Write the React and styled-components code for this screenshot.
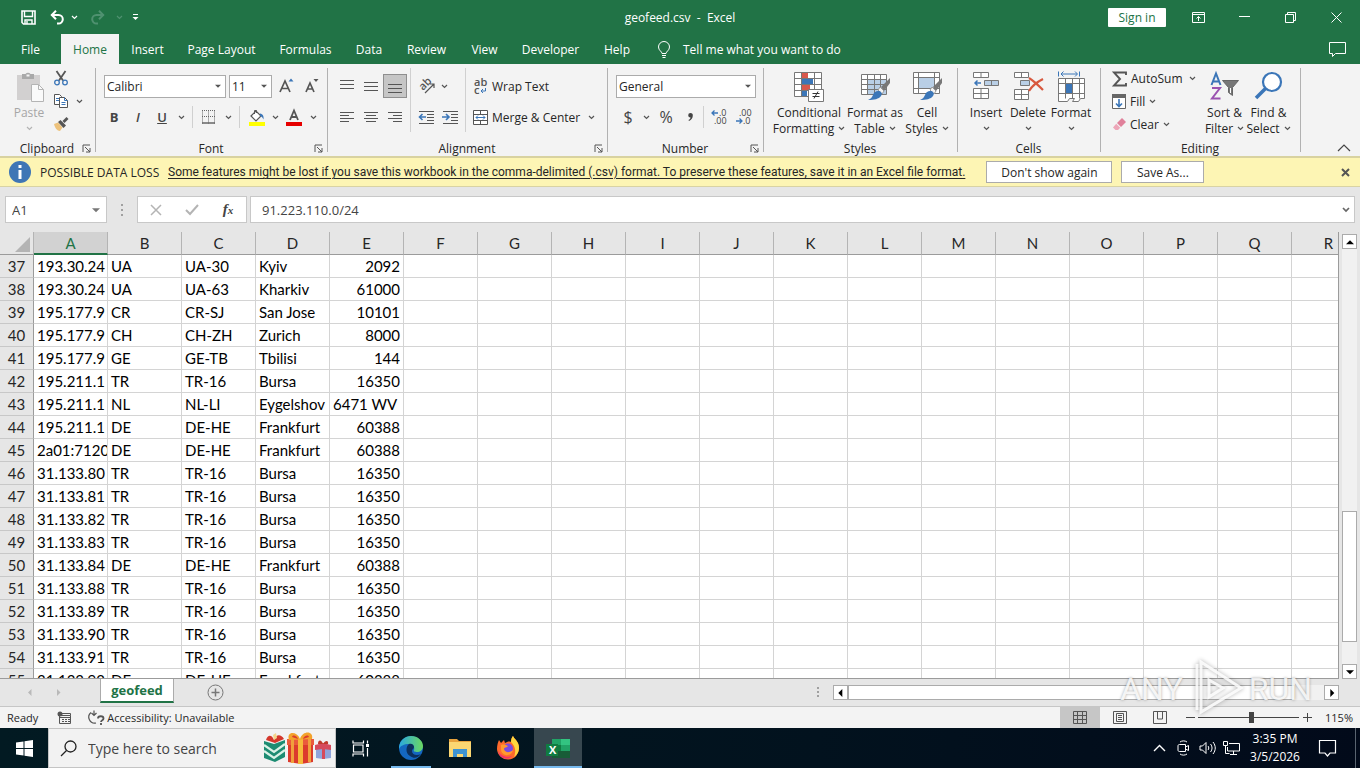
import React from "react";
import styled, { createGlobalStyle, css } from "styled-components";

const uiFont = `"Open Sans", "Noto Sans", sans-serif`;
const cellFont = `"Lato", "Open Sans", sans-serif`;

const GlobalStyle = createGlobalStyle`
  * {
    box-sizing: border-box;
  }
  body {
    margin: 0;
    overflow: hidden;
    font-family: ${uiFont};
    font-size: 12px;
    color: #262626;
  }
  button, input, select {
    font: inherit;
    color: inherit;
    margin: 0;
    padding: 0;
  }
  button {
    border: none;
    background: none;
    white-space: nowrap;
  }
  svg {
    display: block;
    flex: none;
    overflow: visible;
  }
`;

const Desktop = styled.div`
  height: 100vh;
  display: flex;
  flex-direction: column;
  background: #e6e6e6;
`;

/* ---------- title bar ---------- */

const TitleBar = styled.header`
  height: 34px;
  flex: none;
  display: grid;
  grid-template-columns: 1fr auto 1fr;
  align-items: center;
  background: #217346;
  color: #fff;
`;

const QuickAccess = styled.div`
  display: flex;
  align-items: center;
  padding-left: 16px;
`;

const WindowButtons = styled.div`
  display: flex;
  align-items: center;
  justify-content: flex-end;
  padding-right: 1px;
`;

const SignIn = styled.button`
  width: 58px;
  height: 19px;
  margin-right: 9px;
  background: #fff;
  color: #217346;
  border-radius: 1px;
`;

const IconButton = styled.button`
  width: ${(p) => p.$w || 24}px;
  height: ${(p) => p.$h || 24}px;
  flex: none;
  display: flex;
  align-items: center;
  justify-content: center;
  ${(p) =>
    p.$on &&
    css`
      background: #c6c6c6;
      border: 1px solid #8f8f8f;
    `}
`;

/* ---------- tabs ---------- */

const TabBar = styled.nav`
  height: 30px;
  flex: none;
  display: flex;
  align-items: stretch;
  background: #217346;
  padding-right: 11px;
`;

const Tab = styled.button`
  width: ${(p) => p.$w}px;
  color: ${(p) => (p.$active ? "#217346" : "#fff")};
  background: ${(p) => (p.$active ? "#f3f3f3" : "none")};
`;

const TellMe = styled.button`
  display: flex;
  align-items: center;
  gap: 12px;
  margin-left: 14px;
  margin-right: auto;
  color: #fff;
`;

/* ---------- ribbon ---------- */

const Ribbon = styled.div`
  height: 92px;
  flex: none;
  display: flex;
  padding-top: 4px;
  background: #f3f3f3;
`;

const Group = styled.section`
  width: ${(p) => p.$w}px;
  height: 88px;
  flex: none;
  display: flex;
  flex-direction: column;
  background: linear-gradient(#b1b1b1, #b1b1b1) right top / 1px 84px no-repeat;
`;

const GroupBody = styled.div`
  height: 72px;
  display: flex;
  align-items: flex-start;
  padding-left: ${(p) => p.$pad || 0}px;
`;

const GroupFooter = styled.div`
  height: 16px;
  display: grid;
  grid-template-columns: 16px 1fr 16px;
  align-items: center;
  justify-items: center;
  padding-right: 2px;
`;

const Stack = styled.div`
  display: flex;
  flex-direction: column;
  gap: ${(p) => p.$gap || 0}px;
`;

const Line = styled.div`
  display: flex;
  align-items: center;
  gap: ${(p) => p.$gap || 0}px;
  height: ${(p) => p.$h || 24}px;
  padding-left: ${(p) => p.$pad || 0}px;
`;

const Rule = styled.span`
  width: 1px;
  height: ${(p) => p.$h || 22}px;
  margin: 0 ${(p) => p.$m || 4}px;
  background: #d0d0d0;
`;

const BigButton = styled.button`
  width: ${(p) => p.$w}px;
  height: 72px;
  padding-top: 4px;
  display: flex;
  flex-direction: column;
  align-items: center;
  line-height: 16px;
  color: ${(p) => (p.$off ? "#a6a6a6" : "#262626")};
  svg:first-child {
    margin-bottom: 2px;
  }
`;

const CaretLine = styled.span`
  display: flex;
  align-items: center;
  gap: 4px;
  height: 16px;
`;

const TextButton = styled.button`
  display: flex;
  align-items: center;
  gap: 4px;
  height: ${(p) => p.$h || 24}px;
`;

const Letter = styled.span`
  font-size: 13px;
  color: #444;
  font-weight: ${(p) => (p.$bold ? 700 : 600)};
  font-style: ${(p) => (p.$italic ? "italic" : "normal")};
  text-decoration: ${(p) => (p.$under ? "underline" : "none")};
`;

const Sign = styled.span`
  font-size: 16px;
  color: #444;
`;

const SelectBox = styled.label`
  display: grid;
  align-items: center;
  width: ${(p) => p.$w}px;
  height: 23px;
  border: 1px solid #ababab;
  background: #fff;
  select {
    grid-area: 1 / 1;
    width: 100%;
    height: 21px;
    padding-left: 2px;
    border: none;
    background: none;
    appearance: none;
  }
  svg {
    grid-area: 1 / 1;
    justify-self: end;
    margin-right: 4px;
    pointer-events: none;
  }
`;

const CollapseButton = styled(IconButton)`
  margin-left: auto;
  margin-right: 4px;
  align-self: flex-end;
  height: 16px;
`;

/* ---------- message bar ---------- */

const MessageBar = styled.div`
  height: 31px;
  flex: none;
  display: flex;
  align-items: center;
  padding: 0 8px 0 9px;
  background: #fdf5b4;
  border-top: 2px solid #d8d2a0;
  border-bottom: 1px solid #d9d3a4;
`;

const MessageTitle = styled.span`
  width: 119px;
  margin: 0 9px;
  white-space: nowrap;
`;

const MessageLink = styled.span`
  flex: 0 1 787px;
  margin-right: 21px;
  white-space: nowrap;
  font-family: "Roboto", sans-serif;
  a {
    color: #262626;
    text-underline-offset: 2px;
  }
`;

const MessageButton = styled.button`
  width: ${(p) => p.$w}px;
  height: 22px;
  margin-right: 9px;
  background: #fff;
  border: 1px solid #ababab;
`;

const CloseButton = styled(IconButton)`
  width: 14px;
  margin-left: auto;
`;

/* ---------- formula bar ---------- */

const FormulaBar = styled.div`
  height: 45px;
  flex: none;
  display: flex;
  padding: 9px 5px 9px 5px;
  font-size: 13px;
  color: #444;
`;

const FormulaPart = styled.div`
  display: flex;
  align-items: center;
  width: ${(p) => (p.$w ? `${p.$w}px` : "auto")};
  flex: ${(p) => (p.$w ? "none" : "1")};
  border: 1px solid #c8c8c8;
  background: #fff;
  input {
    flex: 1;
    min-width: 0;
    height: 24px;
    padding-left: ${(p) => p.$pad || 6}px;
    border: none;
    background: none;
    outline: none;
  }
`;

const Grip = styled.span`
  width: 30px;
  display: flex;
  align-items: center;
  justify-content: center;
`;

const FxLabel = styled.span`
  font-family: "Liberation Serif", serif;
  font-style: italic;
  font-weight: 700;
  font-size: 15px;
  small {
    font-size: 11px;
  }
`;

const Gap = styled.span`
  width: ${(p) => p.$w || 3}px;
  flex: ${(p) => (p.$grow ? "1" : "none")};
`;

/* ---------- sheet ---------- */

const SheetArea = styled.main`
  flex: 1;
  min-height: 0;
  display: flex;
`;

const SheetView = styled.div`
  flex: 1;
  min-width: 0;
  overflow: hidden;
  border-right: 1px solid #9b9b9b;
  border-bottom: 1px solid #9b9b9b;
`;

const Sheet = styled.table`
  table-layout: fixed;
  width: max-content;
  border-collapse: separate;
  border-spacing: 0;
  font-family: ${cellFont};
  font-size: 15px;
  line-height: 20px;
  color: #000;
`;

const ColHead = styled.th`
  width: 74px;
  min-width: 74px;
  height: 23px;
  padding: 0;
  font-weight: 400;
  background: ${(p) => (p.$active ? "#d2d2d2" : "#e6e6e6")};
  color: ${(p) => (p.$active ? "#217346" : "#262626")};
  border-right: 1px solid #b4b4b4;
  border-bottom: ${(p) => (p.$active ? "2px solid #217346" : "1px solid #9b9b9b")};
`;

const Corner = styled.th`
  width: 34px;
  min-width: 34px;
  padding: 0 3px 2px 0;
  vertical-align: bottom;
  border-right: 1px solid #b4b4b4;
  border-bottom: 1px solid #9b9b9b;
  svg {
    margin-left: auto;
  }
`;

const RowHead = styled.th`
  height: 23px;
  padding: 0;
  font-weight: 400;
  color: #262626;
  background: #e6e6e6;
  border-right: 1px solid #9b9b9b;
  border-bottom: 1px solid #c8c8c8;
`;

const Cell = styled.td`
  height: 23px;
  max-width: 74px;
  padding: 0 3px;
  overflow: hidden;
  white-space: nowrap;
  text-align: ${(p) => (p.$right ? "right" : "left")};
  background: #fff;
  border-right: 1px solid #d4d4d4;
  border-bottom: 1px solid #d4d4d4;
`;

const VScroll = styled.div`
  width: 15px;
  margin: 2px 3px 0;
  display: flex;
  flex-direction: column;
  background: #f1f1f1;
`;

const ScrollButton = styled.button`
  width: 15px;
  height: 15px;
  flex: none;
  display: flex;
  align-items: center;
  justify-content: center;
  background: #fff;
  border: 1px solid #ababab;
`;

const VThumb = styled.div`
  height: 131px;
  margin-top: auto;
  margin-bottom: 22px;
  background: #fff;
  border: 1px solid #ababab;
`;

/* ---------- sheet tabs and status bar ---------- */

const SheetTabs = styled.div`
  height: 27px;
  flex: none;
  display: flex;
  align-items: center;
  padding-right: 21px;
`;

const SheetNav = styled.div`
  width: 100px;
  display: flex;
  padding-left: 15px;
`;

const SheetTab = styled.button`
  width: 74px;
  height: 24px;
  align-self: flex-start;
  background: #fff;
  color: #217346;
  font-size: 13px;
  font-weight: 700;
  border: 1px solid #ababab;
  border-top: none;
  border-bottom: 2px solid #217346;
`;

const AddSheet = styled(IconButton)`
  margin-left: 29px;
`;

const HScroll = styled.div`
  margin-left: auto;
  width: 39%;
  display: flex;
  align-items: center;
`;

const HTrack = styled.div`
  flex: 1;
  height: 15px;
  background: #f1f1f1;
`;

const HThumb = styled.div`
  width: 94%;
  height: 15px;
  background: #fff;
  border: 1px solid #ababab;
`;

const StatusBar = styled.footer`
  height: 22px;
  flex: none;
  display: flex;
  align-items: center;
  padding: 0 7px;
  background: #f3f3f3;
  border-top: 1px solid #c6c6c6;
  font-size: 11px;
`;

const StatusItem = styled.span`
  display: flex;
  align-items: center;
  gap: 2px;
  margin-right: ${(p) => p.$mr || 0}px;
`;

const ViewButton = styled.button`
  width: 40px;
  height: 21px;
  display: flex;
  align-items: center;
  justify-content: center;
  background: ${(p) => (p.$on ? "#c6c6c6" : "none")};
`;

const Zoom = styled.div`
  display: flex;
  align-items: center;
  margin-left: 5px;
  input {
    width: 101px;
    height: 12px;
    margin: 0 3px;
    appearance: none;
    background: linear-gradient(#444, #444) center / 100% 1px no-repeat;
  }
  input::-webkit-slider-thumb {
    appearance: none;
    width: 5px;
    height: 11px;
    background: #444;
  }
`;

const ZoomLabel = styled.span`
  width: 41px;
  text-align: right;
`;

/* ---------- taskbar ---------- */

const Taskbar = styled.div`
  height: 40px;
  flex: none;
  display: flex;
  background: linear-gradient(90deg, #021a22, #02121e 60%, #020a1a);
  color: #fff;
`;

const TaskButton = styled.button`
  width: ${(p) => p.$w || 48}px;
  height: 40px;
  margin: 0 ${(p) => p.$mx || 0}px;
  display: flex;
  align-items: center;
  justify-content: center;
  background: ${(p) => (p.$active ? "#37474f" : "none")};
  box-shadow: ${(p) => (p.$open ? "inset 0 -2px #76b9ed" : "none")};
`;

const SearchBox = styled.label`
  width: 288px;
  display: flex;
  align-items: center;
  gap: 11px;
  padding: 0 4px 0 11px;
  background: #f2f2f2;
  border: 1px solid #c4c4c4;
  color: #3c3c3c;
  input {
    flex: 1;
    min-width: 0;
    border: none;
    background: none;
    outline: none;
    font-size: 14px;
  }
  input::placeholder {
    color: #444;
    opacity: 1;
  }
`;

const Tray = styled.div`
  margin-left: auto;
  display: flex;
  align-items: center;
`;

const Clock = styled.button`
  width: 64px;
  line-height: 18px;
  text-align: center;
`;

const ShowDesktop = styled.button`
  width: 5px;
  height: 40px;
  margin-left: 8px;
  border-left: 1px solid #5a6470;
`;

const Watermark = styled.div`
  position: absolute;
  right: 48px;
  bottom: 48px;
  display: flex;
  align-items: center;
  gap: 4px;
  pointer-events: none;
  font-family: "Roboto", sans-serif;
  font-size: 32px;
  line-height: 60px;
  color: rgba(255, 255, 255, 0.85);
  text-shadow: 0 0 3px rgba(0, 0, 0, 0.35);
  svg {
    filter: drop-shadow(0 0 2px rgba(0, 0, 0, 0.35));
  }
`;

/* ---------- icons ---------- */

const Icon = ({ w = 16, h = w, children, ...rest }) => (
  <svg
    width={w}
    height={h}
    viewBox={`0 0 ${w} ${h}`}
    fill="none"
    stroke="#555"
    aria-hidden="true"
    {...rest}
  >
    {children}
  </svg>
);

const Caret = ({ color = "#555" }) => (
  <Icon w={7} h={5} stroke={color}>
    <path d="M1 1l2.500 2.500L6 1" strokeWidth="1.200" />
  </Icon>
);

const triangles = {
  down: "M0 2h7l-3.500 3.500z",
  up: "M0 5.500h7L3.500 2z",
  left: "M5.500 0v7L2 3.500z",
  right: "M2 0v7l3.500-3.500z",
};

const Triangle = ({ dir = "down", color = "#555", s = 7 }) => (
  <svg width={s} height={s} viewBox="0 0 7 7" aria-hidden="true">
    <path d={triangles[dir]} fill={color} />
  </svg>
);

const Launcher = () => (
  <Icon w={9} stroke="#555">
    <path d="M1 8V1h7M3 3l5 5M8 4v4H4" />
  </Icon>
);

const SaveIcon = () => (
  <Icon w={15} stroke="#fff">
    <path d="M1 1h13v13H2.500L1 12.500z" strokeWidth="1.600" />
    <path d="M3.500 1v5.500h8V1M4 14v-4h7v4M6 14v-3" strokeWidth="1.400" />
  </Icon>
);

const UndoIcon = ({ flip }) => (
  <Icon w={15} stroke={flip ? "#4f9170" : "#fff"}>
    <g transform={flip ? "translate(15 0) scale(-1 1)" : undefined}>
      <path d="M1.500 5h7a4.300 4.300 0 0 1 0 8.600H7" strokeWidth="2" />
      <path d="M6 .8L1.800 5 6 9.200" strokeWidth="2" />
    </g>
  </Icon>
);

const CustomizeIcon = () => (
  <Icon w={7} h={8} stroke="#fff">
    <path d="M1 1.500h5" />
    <path d="M.5 4h6l-3 3z" fill="#fff" stroke="none" />
  </Icon>
);

const PasteIcon = () => (
  <Icon w={30} h={31} stroke="none">
    <path d="M3 3h23v25H3z" fill="#d2d0d0" />
    <path d="M8 2h3.500a3 3 0 0 1 5 0H20v5H8z" fill="#a9a9a9" />
    <path d="M12.500 2.500h3v2h-3z" fill="#f3f3f3" />
    <path d="M17.500 12.500h7l5 5v12h-12z" fill="#fafafa" stroke="#b4b4b4" />
    <path d="M24.500 12.500v5h5" stroke="#b4b4b4" />
  </Icon>
);

const CutIcon = () => (
  <Icon w={16}>
    <path d="M3.500 1l6.500 9.500M12.500 1L6 10.500" strokeWidth="1.800" />
    <circle cx="4" cy="12.500" r="2.300" stroke="#3b76b8" strokeWidth="1.300" />
    <circle cx="12" cy="12.500" r="2.300" stroke="#3b76b8" strokeWidth="1.300" />
  </Icon>
);

const CopyIcon = () => (
  <Icon w={16}>
    <path d="M1.500 1.500h5l2 2v8h-7z" fill="#fff" />
    <path d="M6.500 4.500h5l3 3v7h-8z" fill="#fff" />
    <path d="M11.500 4.500v3h3M3 5.500h3M3 7.500h3M8.500 9.500h4M8.500 11.500h4" stroke="#3b76b8" />
  </Icon>
);

const PainterIcon = () => (
  <Icon w={16} stroke="none">
    <path d="M1 8l4-1.500 4.500 5L7 15c-3 0-5-3-6-7z" fill="#edc27c" />
    <path d="M5 6l2.500-2 5.500 5.500L10.500 12z" fill="#555" />
    <path d="M9.500 5L13.500 1l2 2-4 4z" fill="#555" />
  </Icon>
);

const FontSizeIcon = ({ down }) => (
  <Icon w={15} h={16}>
    <path d={down ? "M2 14L6 5l4 9M3.500 11h5" : "M1 14L6 3l5 11M2.500 10.500h7"} strokeWidth="1.700" />
    <path
      d={down ? "M9.500 1h5L12 4z" : "M9.500 3.500h5L12 .5z"}
      fill={down ? "#555" : "#3b76b8"}
      stroke="none"
    />
  </Icon>
);

const BordersIcon = () => (
  <Icon w={14} stroke="#666">
    <path d="M.5.5v13M6.500.5v13M12.500.5v13M0 .5h13M0 6.500h13" strokeDasharray="1 1" />
    <path d="M0 13h13" strokeWidth="1.500" />
  </Icon>
);

const FillColorIcon = () => (
  <Icon w={17} h={17}>
    <path d="M3 7l5-5 5 5-5 5z" fill="#fff" strokeWidth="1.200" />
    <path d="M6.500 5V1.500h2V4" />
    <path d="M12 4.500c3 .5 4 3 3.500 6-1-2-1.500-3-3.500-3.500z" fill="#3b76b8" stroke="none" />
    <path d="M1 13h16v4H1z" fill="#ffff00" stroke="none" />
  </Icon>
);

const FontColorIcon = () => (
  <Icon w={16} h={17}>
    <path d="M4 11L8 1.500 12 11M5.500 8h5" strokeWidth="1.800" />
    <path d="M0 13h16v4H0z" fill="#e60000" stroke="none" />
  </Icon>
);

// each entry is one line of the icon: [y, x1, x2]
const textLines = {
  top: [[2.5, 1, 15], [6.5, 1, 15], [10.5, 1, 15]],
  middle: [[4.5, 1, 15], [8.5, 1, 15], [12.5, 1, 15]],
  bottom: [[6.5, 1, 15], [10.5, 1, 15], [14.5, 1, 15]],
  left: [[3.5, 1, 15], [6.5, 1, 10], [9.5, 1, 15], [12.5, 1, 10]],
  center: [[3.5, 1, 15], [6.5, 3, 13], [9.5, 1, 15], [12.5, 3, 13]],
  right: [[3.5, 1, 15], [6.5, 6, 15], [9.5, 1, 15], [12.5, 6, 15]],
};

const LinesIcon = ({ kind }) => (
  <Icon w={16}>
    {textLines[kind].map(([y, a, b]) => (
      <path key={y} d={`M${a} ${y}H${b}`} />
    ))}
  </Icon>
);

const IndentIcon = ({ out }) => (
  <Icon w={17} h={16}>
    <path d="M1 2.500h15M9 5.500h7M9 8.500h7M9 11.500h7M1 14.500h15" />
    <path
      d={out ? "M8 8H2M4.500 5L1.500 8l3 3" : "M0 8h6M4 5l3 3-3 3"}
      stroke="#3b76b8"
      strokeWidth="1.600"
    />
  </Icon>
);

const OrientationIcon = () => (
  <Icon w={17} h={16}>
    <text fontSize="11" fontWeight="600" fill="#555" stroke="none" transform="translate(5 13) rotate(-45)">
      ab
    </text>
    <path d="M7 15l8.500-8.500M12 6h4v4" strokeWidth="1.200" />
  </Icon>
);

const WrapIcon = () => (
  <Icon w={15} h={17}>
    <text x="1" y="8" fontSize="11" fontWeight="600" fill="#555" stroke="none">
      ab
      <tspan x="1" y="16">
        c
      </tspan>
    </text>
    <path d="M12.500 10v3H8.500M10 11l-2 2 2 2" stroke="#3b76b8" />
  </Icon>
);

const MergeIcon = () => (
  <Icon w={15} stroke="#555">
    <path d="M.5.5h14v14H.5zM.5 4.500h14M.5 10.500h14M7.500.5v4M7.500 10.500v4" fill="#fff" />
    <path d="M3 7.500h9M5 5.500l-2 2 2 2M10 5.500l2 2-2 2" stroke="#3b76b8" />
  </Icon>
);

const CommaIcon = () => (
  <Icon w={5} h={8} stroke="none">
    <path d="M2.500 0a2.300 2.300 0 0 1 2.300 2.500C4.800 5 3.500 7 1 8l-.5-1C2 6.500 2.500 5.500 2.500 4.600A2.300 2.300 0 0 1 2.500 0z" fill="#444" />
  </Icon>
);

const DecimalIcon = ({ more }) => (
  <Icon w={17} h={16} stroke="#3b76b8">
    <text x={more ? 8 : 4} y="7" fontSize="9" fill="#444" stroke="none">
      {more ? ".0" : ".00"}
      <tspan x={more ? 3 : 8} y="15">
        {more ? ".00" : ".0"}
      </tspan>
    </text>
    <path d={more ? "M7 4H1M3.500 1.500L1 4l2.500 2.500" : "M1 12h6M4.500 9.500L7 12l-2.500 2.500"} strokeWidth="1.300" />
  </Icon>
);

const ConditionalIcon = () => (
  <Icon w={30} h={31} stroke="#777">
    <path d="M.5.5h27v24H.5z" fill="#fff" />
    <path d="M8 1h6v5H8zM8 13h8v5H8z" fill="#d8584c" stroke="none" />
    <path d="M8 7h11v5H8zM8 19h5v5H8z" fill="#3b76b8" stroke="none" />
    <path d="M.5 6.500h27M.5 12.500h27M.5 18.500h27M7.500.5v24M20.500.5v24" />
    <path d="M14.500 17.500h15v12h-15z" fill="#fff" />
    <path d="M18.500 21.500h7M18.500 24.500h7M24 19.500l-4 7" stroke="#333" />
  </Icon>
);

const Brush = () => (
  <>
    <path d="M30 6l-9 9 3 4 6-8z" fill="#777" stroke="none" />
    <path d="M20 15l4 4-2 3-4-4z" fill="#f3f3f3" stroke="#999" />
    <path d="M18 19c3 0 5 2 3 5-2 3-7 4-13 4 3-1 4-3 5-5 1-3 3-4 5-4z" fill="#3b76b8" stroke="none" />
  </>
);

const FormatTableIcon = () => (
  <Icon w={30} h={31} stroke="#777">
    <path d="M1.500 2.500h25v20h-25z" fill="#fff" />
    <path d="M8 8h18v14H8z" fill="#b9cfe6" stroke="none" />
    <path d="M1.500 7.500h25M1.500 12.500h25M1.500 17.500h25M7.500 2.500v20M14.500 2.500v20M20.500 2.500v20" />
    <Brush />
  </Icon>
);

const CellStylesIcon = () => (
  <Icon w={30} h={31} stroke="#777">
    <path d="M1.500.5h26v21h-26z" fill="#fff" />
    <path d="M7 6h15v10H7z" fill="#b9cfe6" stroke="none" />
    <path d="M1.500 5.500h26M1.500 16.500h26M6.500.5v21M22.500.5v21" />
    <Brush />
  </Icon>
);

const InsertIcon = () => (
  <Icon w={28} h={31} stroke="#777">
    <path d="M1.500.5h15v5h-15zM9 .5v5M1.500 16.500h15v10h-15zM1.500 21.500h15M9 16.500v10" fill="#fff" />
    <path d="M12.500 8.500h14v5h-14zM19.500 8.500v5" fill="#b9cfe6" />
    <path d="M9 11H3M5.500 8.500L3 11l2.500 2.500" stroke="#3b76b8" strokeWidth="1.500" />
  </Icon>
);

const DeleteIcon = () => (
  <Icon w={31} h={31} stroke="#777">
    <path d="M1.500.5h14v5h-14zM8.500.5v5M1.500 17.500h14v10h-14zM1.500 22.500h14M8.500 17.500v10" fill="#fff" />
    <path d="M7.500 8.500h9v5h-9z" fill="#b9cfe6" />
    <path d="M16 6c5 3 9 7 14 12M30 7c-6 3-11 7-14 12" stroke="#d8583e" strokeWidth="2.200" />
  </Icon>
);

const FormatIcon = () => (
  <Icon w={29} h={31} stroke="#777">
    <path d="M1.500-.5v5M22.500-.5v5M4 2h16M6.500-.5L4 2l2.500 2.500M18-.5L20.500 2 18 4.500" stroke="#3b76b8" />
    <path d="M1.500 6.500h26v20h-4l-2 3h-6l2-3h-5l-2 3h-9z" fill="#fff" />
    <path d="M1.500 11.500h26M1.500 21.500h26M8.500 6.500v20M15.500 6.500v20M22.500 6.500v20" />
    <path d="M9 12h6v9H9z" fill="#3b76b8" stroke="none" />
  </Icon>
);

const SigmaIcon = () => (
  <Icon w={15}>
    <path d="M14 4V1.500H2L8 8l-6 6.500h12V12" strokeWidth="1.900" />
  </Icon>
);

const FillIcon = () => (
  <Icon w={14} h={15} stroke="#666">
    <path d="M.5.5h13v14H.5z" fill="#fff" />
    <path d="M0 0h14v4H0z" fill="#666" stroke="none" />
    <path d="M7 5v8M4 9.500l3 3 3-3" stroke="#3b76b8" strokeWidth="1.600" />
  </Icon>
);

const EraserIcon = () => (
  <Icon w={14} stroke="none">
    <path d="M5 6l5-5 4 4-5 5z" fill="#e0809a" />
    <path d="M4.200 6.800L8.200 10.800 6 13H3.500L1 10.500z" fill="#eda6b8" />
  </Icon>
);

const SortIcon = () => (
  <Icon w={30} h={31}>
    <path d="M1.500 13L6 1.500 10.500 13M3 9.500h6" stroke="#3b76b8" strokeWidth="2" />
    <path d="M2 16h8L2 26.500h8.500" stroke="#9a52b0" strokeWidth="2" />
    <path d="M12.500 8.500h16l-6 7v8l-4-3v-5z" fill="#777" stroke="#666" />
    <path d="M20.500 16v5" stroke="#fff" />
  </Icon>
);

const FindIcon = () => (
  <Icon w={30} h={31} stroke="#3b76b8">
    <path d="M12 16L2 26" strokeWidth="3.500" />
    <circle cx="18" cy="10" r="9" fill="#fff" strokeWidth="2.200" />
  </Icon>
);

const InfoIcon = () => (
  <Icon w={22} stroke="none">
    <circle cx="11" cy="11" r="11" fill="#3f76b5" />
    <path d="M9.500 4h3v3h-3zM9.500 9h3v9h-3z" fill="#fff" />
  </Icon>
);

const GiftsIcon = () => (
  <Icon w={68} h={34} stroke="none">
    <path d="M1 10l10 3 11-4v17l-10 5-11-4z" fill="#1c8c72" />
    <path d="M1 14l10 7 11-8M1 20l10 7 11-8" stroke="#d9f2e6" strokeWidth="2.200" />
    <path d="M3 9c2-6 6-5 8 0 2-6 7-6 10-1l-9 4z" fill="#d4372c" />
    <path d="M10 4l3-2 1 5-3 2z" fill="#f4d58a" />
    <path d="M25 12h25v19l-12 2-13-2z" fill="#dc3a2d" />
    <path d="M24 8h27v6H24z" fill="#ea5a3c" />
    <path d="M28 8h3v24h-3zM45 8h3v23h-3z" fill="#f0a03c" />
    <path d="M35 8h5v25h-5z" fill="#f6b93b" />
    <path d="M26 9c-3-9 8-9 11-1 3-9 14-8 12 0z" fill="#f3a22c" />
    <path d="M29 6c1-3 5-1 6 2zM46 6c-1-3-5-1-6 2z" fill="#dc3a2d" />
    <path d="M53 17l8-2 7 2v10l-8 1-7-1z" fill="#8fa4dc" />
    <path d="M52 14l8-2 8 2v5l-8-1-8 1z" fill="#d64a5c" />
    <path d="M59 13h3v15h-3z" fill="#d64a5c" />
    <path d="M55 13c0-5 4-4 5 0 2-4 6-4 5 0z" fill="#c0392b" />
  </Icon>
);

const EdgeIcon = () => (
  <svg width="26" height="26" viewBox="0 0 26 26" aria-hidden="true">
    <defs>
      <linearGradient id="edgeGreen" x1="0" x2="1">
        <stop offset="0" stopColor="#2aa7e0" />
        <stop offset="1" stopColor="#6bd860" />
      </linearGradient>
    </defs>
    <circle cx="13" cy="13" r="12" fill="#1467c0" />
    <path d="M1 12C2 5 7 1 13 1c7 0 12 5 12 10 0 4-3 6-6 6-2 0-4-1-3-2 1-3-1-6-5-6-5 0-9 2-10 5z" fill="url(#edgeGreen)" />
    <path d="M11 9c-3 2-4 9 1 12 4 3 8 2 11-2-4 2-9 1-9-3 0-2 2-2 2-4s-2-4-5-3z" fill="#0c2f5c" />
  </svg>
);

const FolderIcon = () => (
  <Icon w={22} h={20} stroke="none">
    <path d="M0 1h8l2 2h12v16H0z" fill="#e8a33d" />
    <path d="M0 4h22v15H0z" fill="#fbd772" />
    <path d="M4 11h14v8h-4v-3H8v3H4z" fill="#3e93d1" />
  </Icon>
);

const FirefoxIcon = () => (
  <Icon w={24} stroke="none">
    <path d="M3 4l2 3 3-3 1 3c2-1 4-2 6-1 0-3 1-5 2-6 1 3 6 5 6 12a11 11 0 0 1-22 1C1 9 2 6 3 4z" fill="#ff6a2b" />
    <path d="M15 6c0-3 1-5 2-6 1 3 6 5 6 12 0 4-2 7-5 9 2-5 2-10-3-15z" fill="#ffd73e" />
    <path d="M2 14c2 6 8 8 14 6-3 4-13 4-14-6z" fill="#f0336e" />
    <circle cx="12" cy="12.500" r="5" fill="#7a4be0" />
    <path d="M5 9c3-1 5 0 7 1-1 2-4 1-4 3 1 4 6 4 9 1-1 7-12 7-12-1z" fill="#ff9a2e" />
  </Icon>
);

const ExcelIcon = () => (
  <Icon w={24} h={21} stroke="none">
    <path d="M6 1h9v6H6z" fill="#21a366" />
    <path d="M15 1h9v6h-9z" fill="#33c481" />
    <path d="M6 7h9v6H6z" fill="#107c41" />
    <path d="M15 7h9v6h-9z" fill="#21a366" />
    <path d="M6 13h18v7H6z" fill="#185c37" />
    <path d="M0 6h12v12H0z" fill="#107c41" />
    <text x="3" y="16" fontSize="11" fontWeight="700" fill="#fff">
      X
    </text>
  </Icon>
);

/* ---------- data ---------- */

const tabs = [
  ["Insert", 57],
  ["Page Layout", 91],
  ["Formulas", 77],
  ["Data", 50],
  ["Review", 65],
  ["View", 51],
  ["Developer", 81],
  ["Help", 52],
];

const columns = "ABCDEFGHIJKLMNOPQR".split("");

const rows = [
  ["193.30.24", "UA", "UA-30", "Kyiv", 2092],
  ["193.30.24", "UA", "UA-63", "Kharkiv", 61000],
  ["195.177.9", "CR", "CR-SJ", "San Jose", 10101],
  ["195.177.9", "CH", "CH-ZH", "Zurich", 8000],
  ["195.177.9", "GE", "GE-TB", "Tbilisi", 144],
  ["195.211.1", "TR", "TR-16", "Bursa", 16350],
  ["195.211.1", "NL", "NL-LI", "Eygelshov", "6471 WV"],
  ["195.211.1", "DE", "DE-HE", "Frankfurt", 60388],
  ["2a01:7120", "DE", "DE-HE", "Frankfurt", 60388],
  ["31.133.80", "TR", "TR-16", "Bursa", 16350],
  ["31.133.81", "TR", "TR-16", "Bursa", 16350],
  ["31.133.82", "TR", "TR-16", "Bursa", 16350],
  ["31.133.83", "TR", "TR-16", "Bursa", 16350],
  ["31.133.84", "DE", "DE-HE", "Frankfurt", 60388],
  ["31.133.88", "TR", "TR-16", "Bursa", 16350],
  ["31.133.89", "TR", "TR-16", "Bursa", 16350],
  ["31.133.90", "TR", "TR-16", "Bursa", 16350],
  ["31.133.91", "TR", "TR-16", "Bursa", 16350],
  ["31.133.92", "DE", "DE-HE", "Frankfurt", 60388],
];

/* ---------- parts ---------- */

const RibbonGroup = ({ name, w, pad, launcher, children }) => (
  <Group $w={w} aria-label={name}>
    <GroupBody $pad={pad}>{children}</GroupBody>
    <GroupFooter>
      <span />
      <span>{name}</span>
      {launcher && (
        <IconButton $w={14} $h={14} aria-label={`${name} settings`}>
          <Launcher />
        </IconButton>
      )}
    </GroupFooter>
  </Group>
);

const Dropdown = ({ label, value, w }) => (
  <SelectBox $w={w}>
    <select aria-label={label} defaultValue={value}>
      <option>{value}</option>
    </select>
    <Triangle s={6} />
  </SelectBox>
);

const CaretButton = ({ label, w = 14, color }) => (
  <IconButton $w={w} $h={20} aria-label={label}>
    <Caret color={color} />
  </IconButton>
);

const Big = ({ w, icon, first, second }) => (
  <BigButton $w={w}>
    {icon}
    <span>{first}</span>
    <CaretLine>
      {second}
      <Caret />
    </CaretLine>
  </BigButton>
);

const HomeRibbon = () => (
  <Ribbon>
    <RibbonGroup name="Clipboard" w={96} pad={5} launcher>
      <BigButton $w={48} $off>
        <PasteIcon />
        <span>Paste</span>
        <CaretLine>
          <Caret color="#b4b4b4" />
        </CaretLine>
      </BigButton>
      <Stack>
        <IconButton $w={16} $h={20} aria-label="Cut">
          <CutIcon />
        </IconButton>
        <Line $h={26}>
          <IconButton $w={16} aria-label="Copy">
            <CopyIcon />
          </IconButton>
          <CaretButton label="Copy options" w={20} />
        </Line>
        <IconButton $w={16} $h={20} aria-label="Format Painter">
          <PainterIcon />
        </IconButton>
      </Stack>
    </RibbonGroup>

    <RibbonGroup name="Font" w={232} pad={6} launcher>
      <Stack $gap={1}>
        <Line $h={36} $pad={2}>
          <Line $gap={3}>
            <Dropdown label="Font" value="Calibri" w={122} />
            <Dropdown label="Font size" value="11" w={43} />
          </Line>
          <IconButton $w={28} aria-label="Increase font size">
            <FontSizeIcon />
          </IconButton>
          <IconButton $w={22} aria-label="Decrease font size">
            <FontSizeIcon down />
          </IconButton>
        </Line>
        <Line>
          <IconButton aria-label="Bold">
            <Letter $bold>B</Letter>
          </IconButton>
          <IconButton aria-label="Italic">
            <Letter $italic>I</Letter>
          </IconButton>
          <IconButton aria-label="Underline">
            <Letter $under>U</Letter>
          </IconButton>
          <CaretButton label="Underline style" />
          <Rule />
          <IconButton aria-label="Borders">
            <BordersIcon />
          </IconButton>
          <CaretButton label="Border style" />
          <Rule />
          <IconButton aria-label="Fill color">
            <FillColorIcon />
          </IconButton>
          <CaretButton label="More fill colors" />
          <IconButton aria-label="Font color">
            <FontColorIcon />
          </IconButton>
          <CaretButton label="More font colors" />
        </Line>
      </Stack>
    </RibbonGroup>

    <RibbonGroup name="Alignment" w={280} pad={7} launcher>
      <Stack $gap={1}>
        <Line $h={36}>
          <IconButton aria-label="Top align">
            <LinesIcon kind="top" />
          </IconButton>
          <IconButton aria-label="Middle align">
            <LinesIcon kind="middle" />
          </IconButton>
          <IconButton $on aria-label="Bottom align">
            <LinesIcon kind="bottom" />
          </IconButton>
        </Line>
        <Line>
          <IconButton aria-label="Align left">
            <LinesIcon kind="left" />
          </IconButton>
          <IconButton aria-label="Center">
            <LinesIcon kind="center" />
          </IconButton>
          <IconButton aria-label="Align right">
            <LinesIcon kind="right" />
          </IconButton>
        </Line>
      </Stack>
      <Rule $h={64} $m={3} />
      <Stack $gap={1}>
        <Line $h={36}>
          <IconButton aria-label="Orientation">
            <OrientationIcon />
          </IconButton>
          <CaretButton label="Orientation options" w={12} />
        </Line>
        <Line>
          <IconButton aria-label="Decrease indent">
            <IndentIcon out />
          </IconButton>
          <IconButton aria-label="Increase indent">
            <IndentIcon />
          </IconButton>
        </Line>
      </Stack>
      <Rule $h={64} $m={3} />
      <Stack $gap={1}>
        <Line $h={36} $pad={4}>
          <TextButton>
            <WrapIcon />
            Wrap Text
          </TextButton>
        </Line>
        <Line $pad={4}>
          <TextButton>
            <MergeIcon />
            Merge &amp; Center
          </TextButton>
          <CaretButton label="Merge options" w={22} />
        </Line>
      </Stack>
    </RibbonGroup>

    <RibbonGroup name="Number" w={156} pad={8} launcher>
      <Stack $gap={1}>
        <Line $h={36}>
          <Dropdown label="Number format" value="General" w={140} />
        </Line>
        <Line>
          <IconButton aria-label="Accounting format">
            <Sign>$</Sign>
          </IconButton>
          <CaretButton label="Currency options" w={12} />
          <IconButton $w={28} aria-label="Percent style">
            <Sign>%</Sign>
          </IconButton>
          <IconButton $w={20} aria-label="Comma style">
            <CommaIcon />
          </IconButton>
          <Rule $m={3} />
          <IconButton aria-label="Increase decimal">
            <DecimalIcon more />
          </IconButton>
          <IconButton aria-label="Decrease decimal">
            <DecimalIcon />
          </IconButton>
        </Line>
      </Stack>
    </RibbonGroup>

    <RibbonGroup name="Styles" w={194} pad={8}>
      <Big w={74} icon={<ConditionalIcon />} first="Conditional" second="Formatting" />
      <Big w={58} icon={<FormatTableIcon />} first="Format as" second="Table" />
      <Big w={46} icon={<CellStylesIcon />} first="Cell" second="Styles" />
    </RibbonGroup>

    <RibbonGroup name="Cells" w={143} pad={7}>
      <Big w={42} icon={<InsertIcon />} first="Insert" />
      <Big w={42} icon={<DeleteIcon />} first="Delete" />
      <Big w={44} icon={<FormatIcon />} first="Format" />
    </RibbonGroup>

    <RibbonGroup name="Editing" w={200} pad={11}>
      <Stack>
        <Line $h={20}>
          <TextButton $h={20}>
            <SigmaIcon />
            AutoSum
          </TextButton>
          <CaretButton label="AutoSum options" w={20} />
        </Line>
        <TextButton $h={26}>
          <FillIcon />
          Fill
          <Caret />
        </TextButton>
        <TextButton $h={20}>
          <EraserIcon />
          Clear
          <Caret />
        </TextButton>
      </Stack>
      <Big w={44} icon={<SortIcon />} first="Sort &amp;" second="Filter" />
      <Big w={44} icon={<FindIcon />} first="Find &amp;" second="Select" />
    </RibbonGroup>

    <CollapseButton aria-label="Collapse the ribbon">
      <Icon w={14} h={8} stroke="#444">
        <path d="M1 7l6-6 6 6" strokeWidth="1.200" />
      </Icon>
    </CollapseButton>
  </Ribbon>
);

const Worksheet = () => (
  <Sheet>
    <thead>
      <tr>
        <Corner aria-label="Select all">
          <Icon w={15} stroke="none">
            <path d="M15 0v15H0z" fill="#b4b4b4" />
          </Icon>
        </Corner>
        {columns.map((name) => (
          <ColHead key={name} scope="col" $active={name === "A"}>
            {name}
          </ColHead>
        ))}
      </tr>
    </thead>
    <tbody>
      {rows.map((row, i) => (
        <tr key={i}>
          <RowHead scope="row">{i + 37}</RowHead>
          {columns.map((name, c) => (
            <Cell key={name} $right={typeof row[c] === "number"}>
              {row[c]}
            </Cell>
          ))}
        </tr>
      ))}
    </tbody>
  </Sheet>
);

const App = () => {
  return (
    <>
      <GlobalStyle />
      <Desktop>
        <TitleBar>
          <QuickAccess>
            <IconButton aria-label="Save">
              <SaveIcon />
            </IconButton>
            <IconButton $w={34} aria-label="Undo">
              <UndoIcon />
            </IconButton>
            <CaretButton label="Undo history" w={1} color="#fff" />
            <IconButton $w={44} aria-label="Redo">
              <UndoIcon flip />
            </IconButton>
            <CaretButton label="Redo history" w={1} color="#4f9170" />
            <IconButton $w={30} aria-label="Customize toolbar">
              <CustomizeIcon />
            </IconButton>
          </QuickAccess>
          <span>geofeed.csv&nbsp; -&nbsp; Excel</span>
          <WindowButtons>
            <SignIn>Sign in</SignIn>
            <IconButton $w={46} aria-label="Ribbon display options">
              <Icon w={13} h={11} stroke="#fff">
                <path d="M.5.5h12v10H.5zM.5 2.500h12M6.500 9V4.500M4.500 6.500l2-2 2 2" />
              </Icon>
            </IconButton>
            <IconButton $w={46} aria-label="Minimize">
              <Icon w={11} stroke="#fff">
                <path d="M0 4.500h11" />
              </Icon>
            </IconButton>
            <IconButton $w={46} aria-label="Restore">
              <Icon w={11} stroke="#fff">
                <path d="M.5 2.500h8v8h-8zM2.500 2.500v-2h8v8h-2" />
              </Icon>
            </IconButton>
            <IconButton $w={46} aria-label="Close">
              <Icon w={11} stroke="#fff">
                <path d="M.5.5l10 10M10.500.5l-10 10" />
              </Icon>
            </IconButton>
          </WindowButtons>
        </TitleBar>

        <TabBar>
          <Tab $w={61}>File</Tab>
          <Tab $w={58} $active>
            Home
          </Tab>
          {tabs.map(([name, w]) => (
            <Tab key={name} $w={w}>
              {name}
            </Tab>
          ))}
          <TellMe>
            <Icon w={14} h={17} stroke="#fff">
              <path d="M5 12.500c0-2-3.500-3-3.500-6.500a5.500 5.500 0 0 1 11 0c0 3.500-3.500 4.500-3.500 6.500zM5 14.500h4M5.500 16.500h3" />
            </Icon>
            Tell me what you want to do
          </TellMe>
          <IconButton $h={30} aria-label="Comments">
            <Icon w={17} h={15} stroke="#fff">
              <path d="M.5.5h16v11H6.500l-3 3v-3h-3z" />
            </Icon>
          </IconButton>
        </TabBar>

        <HomeRibbon />

        <MessageBar role="alert">
          <InfoIcon />
          <MessageTitle>POSSIBLE DATA LOSS</MessageTitle>
          <MessageLink>
            <a href="#formats">
              Some features might be lost if you save this workbook in the comma-delimited (.csv)
              format. To preserve these features, save it in an Excel file format.
            </a>
          </MessageLink>
          <MessageButton $w={126}>Don't show again</MessageButton>
          <MessageButton $w={83}>Save As...</MessageButton>
          <CloseButton aria-label="Close message">
            <Icon w={9} stroke="#555">
              <path d="M1 1l7 7M8 1L1 8" strokeWidth="2" />
            </Icon>
          </CloseButton>
        </MessageBar>

        <FormulaBar>
          <FormulaPart $w={102}>
            <input aria-label="Name box" defaultValue="A1" />
            <IconButton $w={20} aria-label="Names">
              <Triangle s={8} color="#777" />
            </IconButton>
          </FormulaPart>
          <Grip>
            <Icon w={2} h={12} stroke="none">
              <path d="M0 0h2v2H0zM0 5h2v2H0zM0 10h2v2H0z" fill="#a0a0a0" />
            </Icon>
          </Grip>
          <FormulaPart $w={110}>
            <IconButton $w={36} aria-label="Cancel">
              <Icon w={12} stroke="#b4b4b4">
                <path d="M1 1l10 10M11 1L1 11" strokeWidth="1.500" />
              </Icon>
            </IconButton>
            <IconButton $w={36} aria-label="Enter">
              <Icon w={14} h={11} stroke="#b4b4b4">
                <path d="M1 6l4 4 8-9" strokeWidth="2" />
              </Icon>
            </IconButton>
            <IconButton $w={36} aria-label="Insert function">
              <FxLabel>
                f<small>x</small>
              </FxLabel>
            </IconButton>
          </FormulaPart>
          <Gap />
          <FormulaPart $pad={11}>
            <input aria-label="Formula" defaultValue="91.223.110.0/24" />
            <IconButton $w={16} aria-label="Expand formula bar">
              <Icon w={8} h={6} stroke="#666">
                <path d="M1 1l3 3 3-3" strokeWidth="1.700" />
              </Icon>
            </IconButton>
          </FormulaPart>
        </FormulaBar>

        <SheetArea>
          <SheetView>
            <Worksheet />
          </SheetView>
          <VScroll>
            <ScrollButton aria-label="Scroll up">
              <Triangle dir="up" color="#000" s={8} />
            </ScrollButton>
            <VThumb />
            <ScrollButton aria-label="Scroll down">
              <Triangle color="#000" s={8} />
            </ScrollButton>
          </VScroll>
        </SheetArea>

        <SheetTabs>
          <SheetNav>
            <IconButton $w={29} aria-label="Previous sheet">
              <Triangle dir="left" color="#b9b9b9" />
            </IconButton>
            <IconButton $w={29} aria-label="Next sheet">
              <Triangle dir="right" color="#b9b9b9" />
            </IconButton>
          </SheetNav>
          <SheetTab>geofeed</SheetTab>
          <AddSheet aria-label="New sheet">
            <Icon w={17} stroke="#777">
              <circle cx="8.500" cy="8.500" r="7.500" />
              <path d="M8.500 4.500v8M4.500 8.500h8" strokeWidth="1.500" />
            </Icon>
          </AddSheet>
          <HScroll>
            <Icon w={2} h={11} stroke="none">
              <path d="M0 0h2v2H0zM0 4h2v2H0zM0 8h2v2H0z" fill="#a0a0a0" />
            </Icon>
            <Gap $w={14} />
            <ScrollButton aria-label="Scroll left">
              <Triangle dir="left" color="#000" s={8} />
            </ScrollButton>
            <HTrack>
              <HThumb />
            </HTrack>
            <ScrollButton aria-label="Scroll right">
              <Triangle dir="right" color="#000" s={8} />
            </ScrollButton>
          </HScroll>
        </SheetTabs>

        <StatusBar>
          <StatusItem $mr={19}>Ready</StatusItem>
          <StatusItem $mr={17}>
            <Icon w={14} h={13}>
              <path d="M2.500 4.500h11v8h-11zM2.500 6.500h11M5 8.500h2M8 8.500h2M11 8.500h2M5 10.500h2M8 10.500h2M11 10.500h2M5 2.500h8.500v2" />
              <circle cx="3" cy="3" r="2.500" fill="#555" stroke="none" />
            </Icon>
          </StatusItem>
          <StatusItem>
            <Icon w={17} h={15} stroke="#555">
              <path d="M3 2.500a6 6 0 0 0 5 10.500M6 .5v5M3.500 3L6 5.500 8.500 3" strokeWidth="1.200" />
              <path d="M10 8.500c0-3 5.500-3 5.500 0 0 2-2.500 1.500-2.500 3.500M13 13v2" strokeWidth="1.800" />
            </Icon>
            Accessibility: Unavailable
          </StatusItem>
          <Gap $grow />
          <ViewButton $on aria-label="Normal">
            <Icon w={14} h={13}>
              <path d="M.5.5h13v12H.5zM.5 4.500h13M.5 8.500h13M4.500.5v12M9.500.5v12" />
            </Icon>
          </ViewButton>
          <ViewButton aria-label="Page layout">
            <Icon w={14} h={13}>
              <path d="M.5.5h13v12H.5zM3.500 2.500h7v8h-7zM5 4.500h4M5 6.500h4M5 8.500h4" />
            </Icon>
          </ViewButton>
          <ViewButton aria-label="Page break preview">
            <Icon w={14} h={13}>
              <path d="M.5.5h13v12H.5zM4.500.5v7.500h5V.5" />
            </Icon>
          </ViewButton>
          <Zoom>
            <IconButton $w={10} $h={20} aria-label="Zoom out">
              <Icon w={9} stroke="#444">
                <path d="M0 4.500h9" />
              </Icon>
            </IconButton>
            <input type="range" aria-label="Zoom" min="0" max="100" defaultValue="53" />
            <IconButton $w={10} $h={20} aria-label="Zoom in">
              <Icon w={9} stroke="#444">
                <path d="M0 4.500h9M4.500 0v9" />
              </Icon>
            </IconButton>
          </Zoom>
          <ZoomLabel>115%</ZoomLabel>
        </StatusBar>

        <Taskbar>
          <TaskButton aria-label="Start">
            <Icon w={17} stroke="none">
              <path d="M0 2.500L7.500 1.500V8H0zM8.500 1.300L17 0v8H8.500zM0 9h7.500v6.500L0 14.500zM8.500 9H17v8l-8.500-1.300z" fill="#fff" />
            </Icon>
          </TaskButton>
          <SearchBox>
            <Icon w={17} stroke="#222">
              <circle cx="10.500" cy="6.500" r="5.500" strokeWidth="1.300" />
              <path d="M6.500 10.500L1 16" strokeWidth="1.300" />
            </Icon>
            <input aria-label="Search" placeholder="Type here to search" />
            <GiftsIcon />
          </SearchBox>
          <TaskButton aria-label="Task view">
            <Icon w={17} stroke="#fff">
              <path d="M1 .5v2.500h10.500V.5M1 16.500V14h10.500v2.500M1.500 5h9.500v7H1.500zM15.500.5v3M15.500 8v8.500" strokeWidth="1.200" />
              <path d="M14 4h3v3h-3z" fill="#fff" stroke="none" />
            </Icon>
          </TaskButton>
          <TaskButton $w={40} $mx={7} $open aria-label="Microsoft Edge">
            <EdgeIcon />
          </TaskButton>
          <TaskButton $w={44} aria-label="File Explorer">
            <FolderIcon />
          </TaskButton>
          <TaskButton $w={52} aria-label="Firefox">
            <FirefoxIcon />
          </TaskButton>
          <TaskButton $open $active aria-label="Excel">
            <ExcelIcon />
          </TaskButton>
          <Tray>
            <IconButton aria-label="Hidden icons">
              <Icon w={13} h={8} stroke="#fff">
                <path d="M1 7l5.500-5.500L12 7" strokeWidth="1.400" />
              </Icon>
            </IconButton>
            <IconButton aria-label="Meet now">
              <Icon w={13} h={16} stroke="#fff">
                <path d="M2.500 4.500h6v7h-6c-1 0-1.500-.5-1.500-1.500V6c0-1 .5-1.500 1.500-1.500zM8.500 7l3-1.500v5l-3-1.500M3 2c2-1.500 5-1.500 7 0M3 14c2 1.500 5 1.500 7 0" />
              </Icon>
            </IconButton>
            <IconButton aria-label="Volume">
              <Icon w={17} h={14} stroke="#fff">
                <path d="M1 5h2.500L7 1.500v11L3.500 9H1zM9 5c1 1 1 3 0 4M11.500 3c2 2.500 2 5.500 0 8M14 1c3 4 3 8 0 12" />
              </Icon>
            </IconButton>
            <IconButton aria-label="Network">
              <Icon w={17} h={14} stroke="#fff">
                <path d="M6 2.500h10.500v7.500H4.500V6M10.500 10v3M7 13.500h7M.5.5h4v4h-4zM2.500 4.500v8h4" />
              </Icon>
            </IconButton>
            <Clock>
              3:35 PM
              <br />
              3/5/2026
            </Clock>
            <IconButton $w={40} aria-label="Notifications">
              <Icon w={17} h={17} stroke="#fff">
                <path d="M.5.5h16v12.500H11l-2.500 3-2.500-3H.5z" strokeWidth="1.200" />
              </Icon>
            </IconButton>
            <ShowDesktop aria-label="Show desktop" />
          </Tray>
        </Taskbar>
      </Desktop>

      <Watermark>
        ANY
        <Icon w={58} h={62} stroke="rgba(255, 255, 255, 0.85)">
          <path d="M10 6v46M14 4l40 26-40 24V4zM22 22l14 8-14 9z" strokeWidth="3" />
        </Icon>
        RUN
      </Watermark>
    </>
  );
};

export default App;
